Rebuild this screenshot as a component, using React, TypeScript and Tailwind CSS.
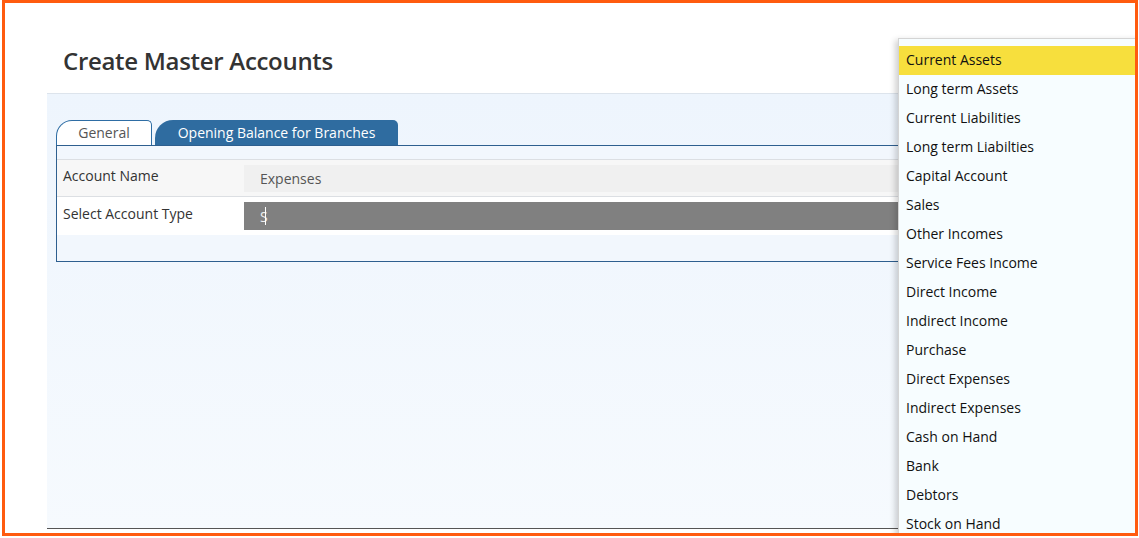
const accountTypes = [
  "Current Assets",
  "Long term Assets",
  "Current Liabilities",
  "Long term Liabilties",
  "Capital Account",
  "Sales",
  "Other Incomes",
  "Service Fees Income",
  "Direct Income",
  "Indirect Income",
  "Purchase",
  "Direct Expenses",
  "Indirect Expenses",
  "Cash on Hand",
  "Bank",
  "Debtors",
  "Stock on Hand",
];

export default function App() {
  return (
    <div
      className="w-[1139px] h-[538px] bg-white"
      style={{ fontFamily: '"Open Sans", "Noto Sans", sans-serif' }}
    >
      <div className="ml-[2px] w-[1136px] h-[536px] border-[3px] border-[#ff5b0f] relative overflow-hidden">
        {/* Title */}
        <div className="h-[90px] pl-[58px] pt-[43px]">
          <h1 className="text-[24px] leading-[30px] font-semibold text-[#333] tracking-[-0.3px]">
            Create Master Accounts
          </h1>
        </div>

        {/* Panel */}
        <div className="ml-[42px] h-[436px] border-t border-[#dde4ec] border-b border-b-[#555] bg-gradient-to-b from-[#eef5fd] to-[#f6fafe] pl-[9px] pt-[26px]">
          {/* Tabs */}
          <div className="flex items-end h-[25px]">
            <div className="w-[96px] h-[25px] bg-white border border-b-0 border-[#2e6da4] rounded-tl-[16px] rounded-tr-[5px] flex items-center justify-center pb-[2px] text-[14px] text-[#555]">
              General
            </div>
            <div className="ml-[3px] w-[243px] h-[25px] bg-[#2f6ca0] rounded-tl-[18px] rounded-tr-[5px] flex items-center justify-center text-[14px] text-white">
              Opening Balance for Branches
            </div>
          </div>

          {/* Form box */}
          <div className="h-[117px] border border-[#2e5f8f] bg-[#f2f7fd]">
            <div className="h-[13px]" />
            <div className="border-t border-[#dcdfe3]">
              <div className="flex h-[37px] bg-[#f7f7f7] border-b border-[#dcdfe3]">
                <div className="w-[187px] pl-[6px] pt-[5px] text-[14px] text-[#333]">Account Name</div>
                <div className="flex-1 mt-[5px] h-[27px] bg-[#f0f0f0] pl-[16px] flex items-center text-[14px] text-[#555]">
                  Expenses
                </div>
              </div>
              <div className="flex h-[38px] bg-white">
                <div className="w-[187px] pl-[6px] pt-[6px] text-[14px] text-[#333]">Select Account Type</div>
                <div className="flex-1 mt-[5px] h-[28px] bg-[#808080] pl-[16px] flex items-center text-[14px] text-[#eee]">
                  S<span className="w-px h-[18px] bg-white -ml-[3px]" />
                </div>
              </div>
            </div>
          </div>
        </div>

        {/* Dropdown list */}
        <div className="absolute left-[893px] top-[35px] w-[260px] h-[520px] bg-[#f7fdff] border border-[#d4d4d4] pt-[7px] shadow-[-3px_2px_6px_rgba(0,0,0,0.18)]">
          {accountTypes.map((t, i) => (
            <div
              key={t}
              className={
                i === 0
                  ? "h-[29px] pl-[7px] pb-[2px] flex items-center text-[14px] text-[#111] bg-[#f7df3d]"
                  : "h-[29px] pl-[7px] pb-[2px] flex items-center text-[14px] text-[#111]"
              }
            >
              {t}
            </div>
          ))}
        </div>
      </div>
    </div>
  );
}
